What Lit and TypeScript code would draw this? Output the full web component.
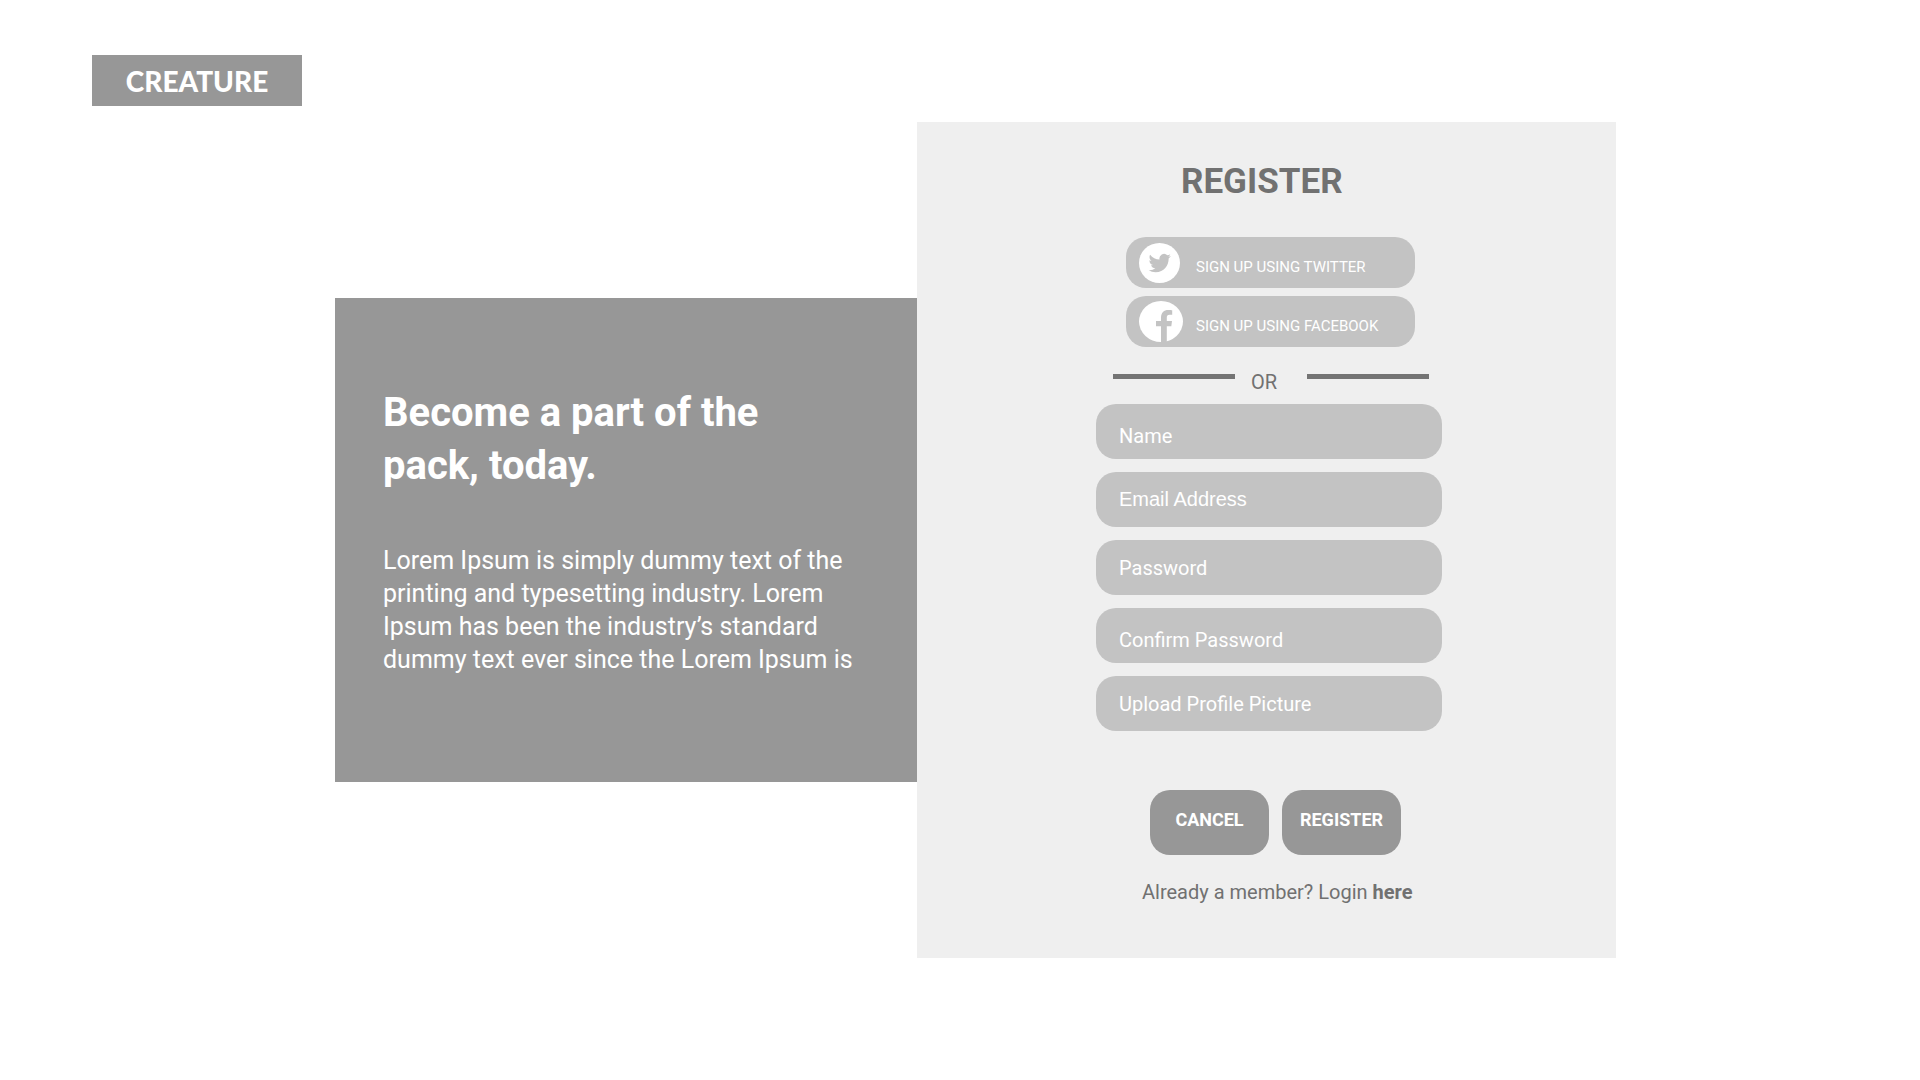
import { LitElement, html, css, svg } from "lit";
import { customElement, state } from "lit/decorators.js";

const twitterIcon = svg`
  <svg class="icon" width="41" height="40" viewBox="0 0 41 40" aria-hidden="true">
    <ellipse cx="20.5" cy="20" rx="20.5" ry="20" fill="#fff" />
    <path
      transform="translate(9.6 8.7) scale(.93 .95)"
      fill="#c3c3c3"
      d="M23.953 4.57a10 10 0 01-2.825.775 4.958 4.958 0 002.163-2.723c-.951.555-2.005.959-3.127 1.184a4.92 4.92 0 00-8.384 4.482C7.69 8.095 4.067 6.13 1.64 3.162a4.822 4.822 0 00-.666 2.475c0 1.71.87 3.213 2.188 4.096a4.904 4.904 0 01-2.228-.616v.06a4.923 4.923 0 003.946 4.827 4.996 4.996 0 01-2.212.085 4.936 4.936 0 004.604 3.417 9.867 9.867 0 01-6.102 2.105c-.39 0-.779-.023-1.17-.067a13.995 13.995 0 007.557 2.209c9.053 0 13.998-7.496 13.998-13.985 0-.21 0-.42-.015-.63A9.935 9.935 0 0024 4.59z"
    />
  </svg>`;

const facebookIcon = svg`
  <svg class="icon" width="44" height="41" viewBox="0 0 44 41" aria-hidden="true">
    <ellipse cx="22" cy="20.5" rx="22" ry="20.5" fill="#fff" />
    <path
      fill="#c3c3c3"
      d="M22 41V25.200H17V20H22V17C22 11.500 25 9 29.200 9C31 9 32.500 9.100 33.200 9.300V13.700H30.500C28.500 13.700 27.800 14.800 27.800 16.500V20H33L32.300 25.200H27.800V41Z"
    />
  </svg>`;

@customElement("app-root")
export class AppRoot extends LitElement {
  @state() private fileName = "Upload Profile Picture";

  static styles = css`
    :host {
      display: block;
      min-height: 100vh;
      background: #fff;
      font-family: Roboto, "Liberation Sans", sans-serif;
      font-size: 20px;
      line-height: 24px;
      color: #717171;
    }
    * {
      box-sizing: border-box;
    }
    h1,
    h2,
    p {
      margin: 0;
    }
    .header {
      display: flex;
      padding: 55px 92px 16px;
    }
    .logo {
      display: flex;
      align-items: center;
      justify-content: center;
      width: 210px;
      height: 51px;
      background: #979797;
      color: #fff;
      font-family: Lato, sans-serif;
      font-size: 28px;
      font-weight: 900;
      text-decoration: none;
    }
    .main {
      display: grid;
      grid-template-columns: 335fr 582fr 699fr 304fr;
      align-items: center;
    }
    .hero {
      grid-column: 2;
      display: flex;
      flex-direction: column;
      gap: 52px;
      padding: 88px 48px 106px;
      background: #979797;
      color: #fff;
    }
    .headline {
      font-size: 40px;
      line-height: 53px;
      font-weight: 700;
    }
    .lead {
      font-size: 25px;
      line-height: 33px;
    }
    .panel {
      grid-column: 3;
      display: flex;
      justify-content: center;
      padding: 39px 0 54px 5px;
      background: #efefef;
    }
    .form {
      display: flex;
      flex-direction: column;
      width: 346px;
    }
    .title {
      padding-left: 85px;
      margin-bottom: 34px;
      font-size: 35px;
      line-height: 42px;
      font-weight: 700;
    }
    .socials {
      display: flex;
      flex-direction: column;
      gap: 8px;
      padding: 0 27px 0 30px;
    }
    .social {
      display: grid;
      grid-template-columns: 57px 1fr;
      align-items: center;
      height: 51px;
      padding: 0 13px;
      border: 0;
      border-radius: 20px;
      background: #c3c3c3;
      color: #fff;
      font: inherit;
      font-size: 15px;
      line-height: 18px;
      text-align: left;
      cursor: pointer;
    }
    .social-text {
      padding-top: 8px;
    }
    .icon {
      display: block;
    }
    .divider {
      display: grid;
      grid-template-columns: 122px 1fr 122px;
      margin: 23px 13px 10px 17px;
    }
    .rule {
      height: 5px;
      margin-top: 4px;
      background: #747474;
    }
    .or {
      padding-left: 16px;
    }
    .fields {
      display: flex;
      flex-direction: column;
      gap: 13px;
    }
    .field {
      display: flex;
      align-items: center;
      width: 100%;
      height: 55px;
      padding: 0 23px;
      border: 0;
      border-radius: 20px;
      background: #c3c3c3;
      color: #fff;
      font: inherit;
    }
    .field.low {
      padding-top: 8px;
    }
    .field.plain {
      font-family: "Liberation Sans", sans-serif;
    }
    .field::placeholder {
      color: #fff;
      opacity: 1;
    }
    .upload {
      cursor: pointer;
    }
    .hidden {
      position: absolute;
      width: 1px;
      height: 1px;
      overflow: hidden;
      clip-path: inset(50%);
    }
    .actions {
      display: flex;
      gap: 13px;
      margin: 59px 0 25px;
      padding-left: 54px;
    }
    .action {
      width: 119px;
      height: 65px;
      padding: 0 0 6px;
      border: 0;
      border-radius: 20px;
      background: #979797;
      color: #fff;
      font: inherit;
      font-size: 18px;
      font-weight: 700;
      cursor: pointer;
    }
    .login {
      padding-left: 46px;
      white-space: nowrap;
    }
    .link {
      color: inherit;
      font-weight: 700;
      text-decoration: none;
    }
  `;

  private onFile(event: Event) {
    const file = (event.target as HTMLInputElement).files?.[0];
    if (file) this.fileName = file.name;
  }

  render() {
    return html`
      <header class="header">
        <a class="logo" href="#">CREATURE</a>
      </header>
      <main class="main">
        <section class="hero">
          <h1 class="headline">Become a part of the<br />pack, today.</h1>
          <p class="lead">
            Lorem Ipsum is simply dummy text of the printing and typesetting
            industry. Lorem Ipsum has been the industry’s standard dummy text
            ever since the Lorem Ipsum is
          </p>
        </section>
        <section class="panel">
          <form class="form" @submit=${(e: Event) => e.preventDefault()}>
            <h2 class="title">REGISTER</h2>
            <div class="socials">
              <button class="social" type="button">
                ${twitterIcon}<span class="social-text">SIGN UP USING TWITTER</span>
              </button>
              <button class="social" type="button">
                ${facebookIcon}<span class="social-text">SIGN UP USING FACEBOOK</span>
              </button>
            </div>
            <div class="divider">
              <span class="rule"></span>
              <span class="or">OR</span>
              <span class="rule"></span>
            </div>
            <div class="fields">
              <input class="field low" type="text" aria-label="Name" placeholder="Name" />
              <input class="field plain" type="email" aria-label="Email Address" placeholder="Email Address" />
              <input class="field" type="password" aria-label="Password" placeholder="Password" />
              <input class="field low" type="password" aria-label="Confirm Password" placeholder="Confirm Password" />
              <label class="field upload">
                ${this.fileName}
                <input class="hidden" type="file" accept="image/*" @change=${this.onFile} />
              </label>
            </div>
            <div class="actions">
              <button class="action" type="reset">CANCEL</button>
              <button class="action" type="submit">REGISTER</button>
            </div>
            <p class="login">Already a member? Login <a class="link" href="#">here</a></p>
          </form>
        </section>
      </main>
    `;
  }
}
